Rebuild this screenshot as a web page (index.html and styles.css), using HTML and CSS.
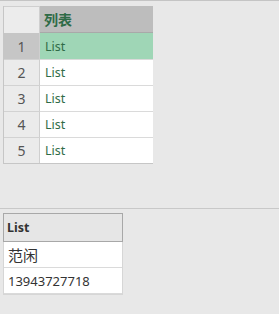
FILE: index.html
```html
<!DOCTYPE html>
<html lang="zh">
  <head>
    <meta charset="UTF-8" />
    <title>List</title>
    <link rel="stylesheet" href="styles.css">
  </head>
  <body>
    <!-- Top pane: list column -->
    <div class="top-pane">
      <div class="grid">
        <div class="corner"></div>
        <div class="col-head">列表</div>

        <div class="row-num selected">1</div>
        <div class="cell selected">List</div>

        <div class="row-num">2</div>
        <div class="cell">List</div>

        <div class="row-num">3</div>
        <div class="cell">List</div>

        <div class="row-num">4</div>
        <div class="cell">List</div>

        <div class="row-num">5</div>
        <div class="cell">List</div>
      </div>
    </div>

    <!-- Bottom pane: record preview -->
    <div class="bottom-pane">
      <div class="preview">
        <div class="preview-head">List</div>
        <div class="preview-cell name">范闲</div>
        <div class="preview-cell">13943727718</div>
      </div>
    </div>
  </body>
</html>
```

FILE: styles.css
```css
* {
  margin: 0;
  padding: 0;
  box-sizing: border-box;
}

body {
  background-color: #e8e8e8;
  font-family: "Noto Sans", "Noto Sans CJK SC", sans-serif;
  font-size: 12.5px;
  width: 279px;
  height: 314px;
  overflow: hidden;
  border-top: 1px solid #c4c4c4;
}

.top-pane {
  height: 208px;
  padding: 5px 0 0 3px;
  border-bottom: 1px solid #c8c8c8;
}

.grid {
  display: grid;
  grid-template-columns: 36px 113px;
  grid-template-rows: 27px repeat(5, 26px);
  width: 150px;
  border: 1px solid #c6c6c6;
  border-top: none;
}

.corner {
  background-color: #ececec;
  border-top: 1px solid #cfcfcf;
  border-right: 1px solid #cfcfcf;
}

.col-head {
  background-color: #bdbdbd;
  color: #2f6b47;
  font-weight: bold;
  font-size: 14px;
  padding-left: 4px;
  display: flex;
  align-items: center;
  border-bottom: 1px solid #a9a9a9;
}

.row-num {
  background-color: #ebebeb;
  color: #555;
  font-size: 14px;
  display: flex;
  align-items: center;
  justify-content: center;
  border-top: 1px solid #d2d2d2;
  border-right: 1px solid #cfcfcf;
}

.row-num.selected {
  background-color: #c6c6c6;
  border-top: none;
}

.cell {
  background-color: #fff;
  color: #2f6b47;
  padding-left: 5px;
  display: flex;
  align-items: center;
  border-top: 1px solid #dadada;
}

.cell.selected {
  background-color: #9fd6b6;
  border-top: none;
}

.bottom-pane {
  padding: 4px 0 0 3px;
}

.preview {
  display: grid;
  grid-template-rows: 28px 26px 26px;
  width: 120px;
  border: 1px solid #d6d6d6;
}

.preview-head {
  background-color: #e6e6e6;
  color: #333;
  font-weight: bold;
  padding-left: 3px;
  display: flex;
  align-items: center;
  border: 1px solid #a8a8a8;
  margin: -1px -1px 0 -1px;
}

.preview-cell {
  background-color: #fff;
  color: #333;
  font-size: 13px;
  padding-left: 4px;
  display: flex;
  align-items: center;
  border-bottom: 1px solid #dadada;
}

.preview-cell.name {
  font-size: 15px;
}
```
